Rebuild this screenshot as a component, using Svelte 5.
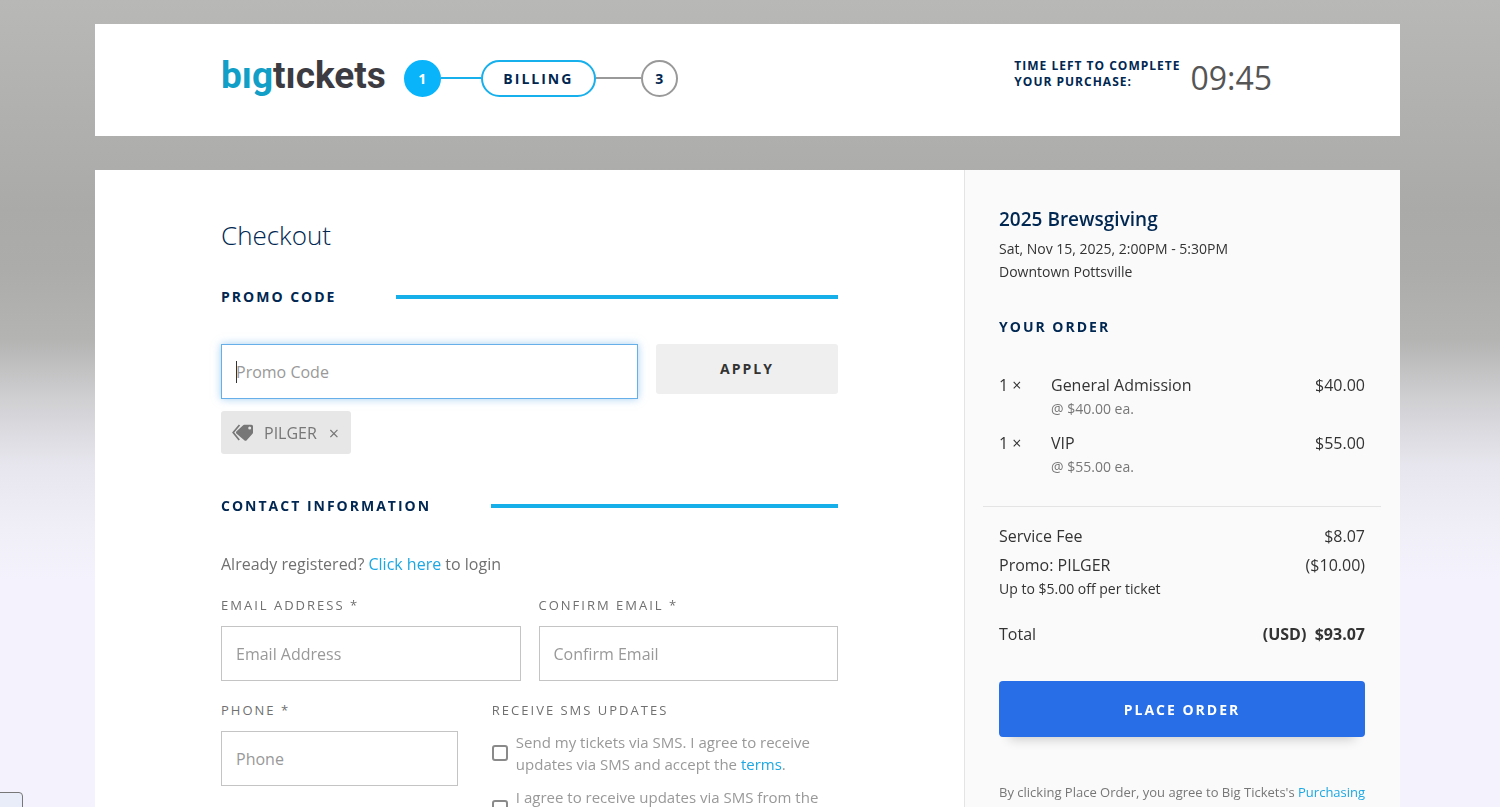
<script lang="ts">
  import { onMount } from 'svelte';

  type Item = { qty: number; name: string; each: string; total: string };

  const items: Item[] = [
    { qty: 1, name: 'General Admission', each: '$40.00', total: '$40.00' },
    { qty: 1, name: 'VIP', each: '$55.00', total: '$55.00' },
  ];

  let promo = '';
  let applied: string | null = 'PILGER';
  let promoInput: HTMLInputElement;

  function applyPromo() {
    if (!promo.trim()) return;
    applied = promo.trim().toUpperCase();
    promo = '';
  }

  onMount(() => {
    promoInput.focus();
  });
</script>

<div class="page">
  <header class="topbar">
    <a class="logo" href="#home" aria-label="bigtickets"><span>bıg</span>tıckets</a>
    <ol class="steps">
      <li class="step done">1</li>
      <li class="line active"></li>
      <li class="step current">BILLING</li>
      <li class="line"></li>
      <li class="step">3</li>
    </ol>
    <div class="timer">
      <span class="timer-label">TIME LEFT TO COMPLETE<br />YOUR PURCHASE:</span>
      <span class="clock">09:45</span>
    </div>
  </header>

  <main class="checkout">
    <section class="form">
      <h1>Checkout</h1>

      <h2 class="ruled">PROMO CODE</h2>
      <form class="promo" on:submit|preventDefault={applyPromo}>
        <input class="field" type="text" placeholder="Promo Code" aria-label="Promo Code" bind:value={promo} bind:this={promoInput} />
        <button class="apply" type="submit">APPLY</button>
      </form>
      {#if applied}
        <div class="tag">
          <svg width="22" height="18" viewBox="0 0 22 18" aria-hidden="true">
            <path d="M7.500 1 1.200 8.500l6 7.500" fill="none" stroke="#777" stroke-width="1.700" />
            <path fill-rule="evenodd" d="M12.300.8h7c1 0 1.700.7 1.700 1.700v6c0 .5-.2.900-.5 1.200l-5.800 6.600c-.7.700-1.700.700-2.400 0L4.300 9.400c-.5-.6-.5-1.200 0-1.800l6.600-6.200c.4-.4.9-.6 1.400-.6ZM17.700 2.500a1.500 1.500 0 1 0 0 3 1.500 1.500 0 0 0 0-3Z" fill="#777" />
          </svg>
          <span>{applied}</span>
          <button type="button" aria-label="Remove promo code" on:click={() => (applied = null)}>×</button>
        </div>
      {/if}

      <h2 class="ruled contact">CONTACT INFORMATION</h2>
      <p class="login">Already registered? <a href="#login">Click here</a> to login</p>

      <div class="row">
        <div class="col">
          <label for="email">EMAIL ADDRESS *</label>
          <input class="field" id="email" type="email" placeholder="Email Address" />
        </div>
        <div class="col">
          <label for="confirm">CONFIRM EMAIL *</label>
          <input class="field" id="confirm" type="email" placeholder="Confirm Email" />
        </div>
      </div>

      <div class="row phone">
        <div class="col">
          <label for="phone">PHONE *</label>
          <input class="field" id="phone" type="tel" placeholder="Phone" />
        </div>
        <fieldset class="col">
          <legend>RECEIVE SMS UPDATES</legend>
          <div class="check">
            <input type="checkbox" id="sms-tickets" />
            <label for="sms-tickets">Send my tickets via SMS. I agree to receive updates via SMS and accept the <a href="#terms">terms</a>.</label>
          </div>
          <div class="check">
            <input type="checkbox" id="sms-organizer" />
            <label for="sms-organizer">I agree to receive updates via SMS from the event organizer.</label>
          </div>
        </fieldset>
      </div>
    </section>

    <aside class="summary">
      <h3>2025 Brewsgiving</h3>
      <p class="meta">Sat, Nov 15, 2025, 2:00PM - 5:30PM</p>
      <p class="meta">Downtown Pottsville</p>

      <h2>YOUR ORDER</h2>
      <table class="items">
        <tbody>
          {#each items as item}
            <tr>
              <td class="qty">{item.qty} ×</td>
              <td>{item.name}<div class="each">@ {item.each} ea.</div></td>
              <td class="amount">{item.total}</td>
            </tr>
          {/each}
        </tbody>
      </table>

      <hr />

      <table class="fees">
        <tbody>
          <tr><td>Service Fee</td><td class="amount">$8.07</td></tr>
          <tr>
            <td>Promo: PILGER<div class="note">Up to $5.00 off per ticket</div></td>
            <td class="amount">($10.00)</td>
          </tr>
          <tr class="total"><td>Total</td><td class="amount"><b>(USD)&nbsp; $93.07</b></td></tr>
        </tbody>
      </table>

      <button class="place" type="button">PLACE ORDER</button>
      <p class="legal">By clicking Place Order, you agree to Big Tickets's <a href="#agreement">Purchasing Agreement</a>, including No Refunds or Exchanges. All sales are final.</p>
    </aside>
  </main>

  <div class="status"></div>
</div>

<style>
  :global(body) { background: #f4f3fd; }

  .page {
    box-sizing: border-box;
    height: 100vh;
    overflow: hidden;
    padding: 24px 100px 0 95px;
    background: linear-gradient(#b8b8b7 0, #aaaaa8 210px, #acacaa 270px, #b4b4b3 340px, #d0d0d3 400px, #e7e6ee 465px, #f0eff8 530px, #f4f3fd 580px);
    font: 16px/24px 'Open Sans', sans-serif;
    color: #333;
  }

  h1, h2, h3, p, ol { margin: 0; padding: 0; }
  a { color: #1ca8e3; text-decoration: none; }
  button, input { font-family: inherit; }

  .topbar {
    display: flex;
    align-items: center;
    box-sizing: border-box;
    height: 112px;
    padding: 0 128px 4px 126px;
    background: #fff;
  }
  .logo { padding-bottom: 4px; font: bold 37px/40px Roboto, sans-serif; color: #3c3b41; }
  .logo span { color: #129fc7; }

  .steps { display: flex; align-items: center; margin-left: 18px; list-style: none; }
  .step {
    box-sizing: border-box;
    min-width: 37px;
    height: 37px;
    border: 2px solid #999;
    border-radius: 19px;
    font-size: 14px;
    line-height: 33px;
    font-weight: 700;
    text-align: center;
    color: #002751;
  }
  .step.done { border-color: #09b4fb; background: #09b4fb; color: #fff; }
  .step.current { width: 115px; border-color: #17b0ec; letter-spacing: 2px; }
  .line { width: 40px; height: 2px; background: #999; }
  .line:nth-child(4) { width: 45px; }
  .line.active { background: #17b0ec; }

  .timer { display: flex; align-items: flex-start; gap: 10px; margin-left: auto; }
  .timer-label { font-size: 12px; line-height: 16px; font-weight: 700; letter-spacing: 1px; color: #002751; }
  .clock { font-size: 32px; line-height: 40px; color: #555; }

  .checkout { display: flex; min-height: 800px; margin-top: 34px; background: #fff; }
  .form { flex: 1; padding: 45px 126px 40px; }

  h1 { font-size: 26px; line-height: 40px; font-weight: 300; color: #002751; }
  h2 { font-size: 14px; line-height: 20px; font-weight: 700; letter-spacing: 2px; color: #002751; }
  .ruled { display: flex; align-items: center; gap: 60px; margin-top: 32px; }
  .ruled::after { content: ''; flex: 1; height: 4px; background: #17afea; }
  .ruled.contact { margin-top: 42px; }

  .field {
    box-sizing: border-box;
    width: 100%;
    height: 55px;
    padding: 0 14px;
    border: 1px solid #c4c4c4;
    border-radius: 0;
    background: #fff;
    font-size: 16px;
    color: #444;
  }
  .field::placeholder { color: #999; opacity: 1; }
  .field:focus { outline: none; border-color: #66afe9; box-shadow: 0 0 8px rgba(102, 175, 233, 0.6); }
  /* steady caret while the box is empty */
  .field:focus:placeholder-shown {
    background: linear-gradient(#333, #333) 14px center / 1px 22px no-repeat #fff;
    caret-color: transparent;
  }

  .promo { display: flex; align-items: flex-start; gap: 18px; margin-top: 37px; }
  .promo .field { flex: 1; }
  .apply {
    width: 182px;
    height: 50px;
    padding: 0 0 2px;
    border: 0;
    border-radius: 3px;
    background: #efefef;
    font-size: 14px;
    font-weight: 700;
    letter-spacing: 2px;
    color: #333;
  }

  .tag {
    display: inline-flex;
    align-items: center;
    gap: 10px;
    height: 43px;
    margin-top: 12px;
    padding: 0 11px;
    border-radius: 3px;
    background: #e7e7e7;
    color: #777;
    vertical-align: top;
  }
  .tag button { padding: 0 1px 0 2px; border: 0; background: none; font-size: 18px; line-height: 20px; color: #777; }

  .login { margin-top: 36px; color: #707070; }

  .row { display: grid; grid-template-columns: 1fr 1fr; gap: 18px; margin-top: 19px; }
  .row.phone { grid-template-columns: 13fr 19fr; gap: 34px; }
  .col > label, legend {
    display: block;
    padding: 0;
    margin-bottom: 11px;
    font-size: 13px;
    line-height: 20px;
    letter-spacing: 2px;
    color: #707070;
  }
  fieldset { min-width: 0; margin: 0; padding: 0; border: 0; }
  .check { display: flex; align-items: center; gap: 8px; margin-bottom: 11px; font-size: 15px; line-height: 22px; color: #999; }
  .check input {
    appearance: none;
    flex: none;
    box-sizing: border-box;
    width: 16px;
    height: 16px;
    margin: 0;
    border: 2px solid #8a8a8a;
    border-radius: 3px;
    background: #fff;
  }
  .check input:checked { background: #1ca8e3; }

  .summary {
    box-sizing: border-box;
    width: 436px;
    padding: 36px 35px 40px 34px;
    border-left: 1px solid #e4e4e4;
    background: #fafafa;
  }
  h3 { margin-bottom: 5px; font-size: 19px; line-height: 26px; font-weight: 600; color: #002751; }
  .meta { font-size: 14px; line-height: 23px; }
  .summary h2 { margin: 34px 0 36px; }

  table { width: 100%; border-collapse: collapse; }
  td { padding: 0 0 5px; vertical-align: top; }
  .items td { padding-bottom: 10px; }
  .qty { width: 52px; }
  .amount { text-align: right; }
  .each, .note { font-size: 14px; }
  .each { color: #777; }
  .total td { padding: 16px 0 0; }
  hr { height: 1px; margin: 17px -16px; border: 0; background: #e4e4e4; }

  .place {
    display: block;
    width: 100%;
    height: 56px;
    margin: 35px 0 45px;
    border: 0;
    border-radius: 4px;
    background: #286ee6;
    box-shadow: 0 12px 12px -10px rgba(0, 0, 0, 0.2);
    font-size: 14px;
    font-weight: 700;
    letter-spacing: 2px;
    color: #fff;
  }
  .legal { margin-right: -8px; font-size: 13px; line-height: 21px; color: #777; }

  /* browser link-status bubble peeking in at the corner */
  .status {
    position: fixed;
    left: -4px;
    bottom: -4px;
    width: 25px;
    height: 17px;
    border: 1px solid #777;
    border-radius: 4px;
    background: #e8edf9;
  }
</style>
